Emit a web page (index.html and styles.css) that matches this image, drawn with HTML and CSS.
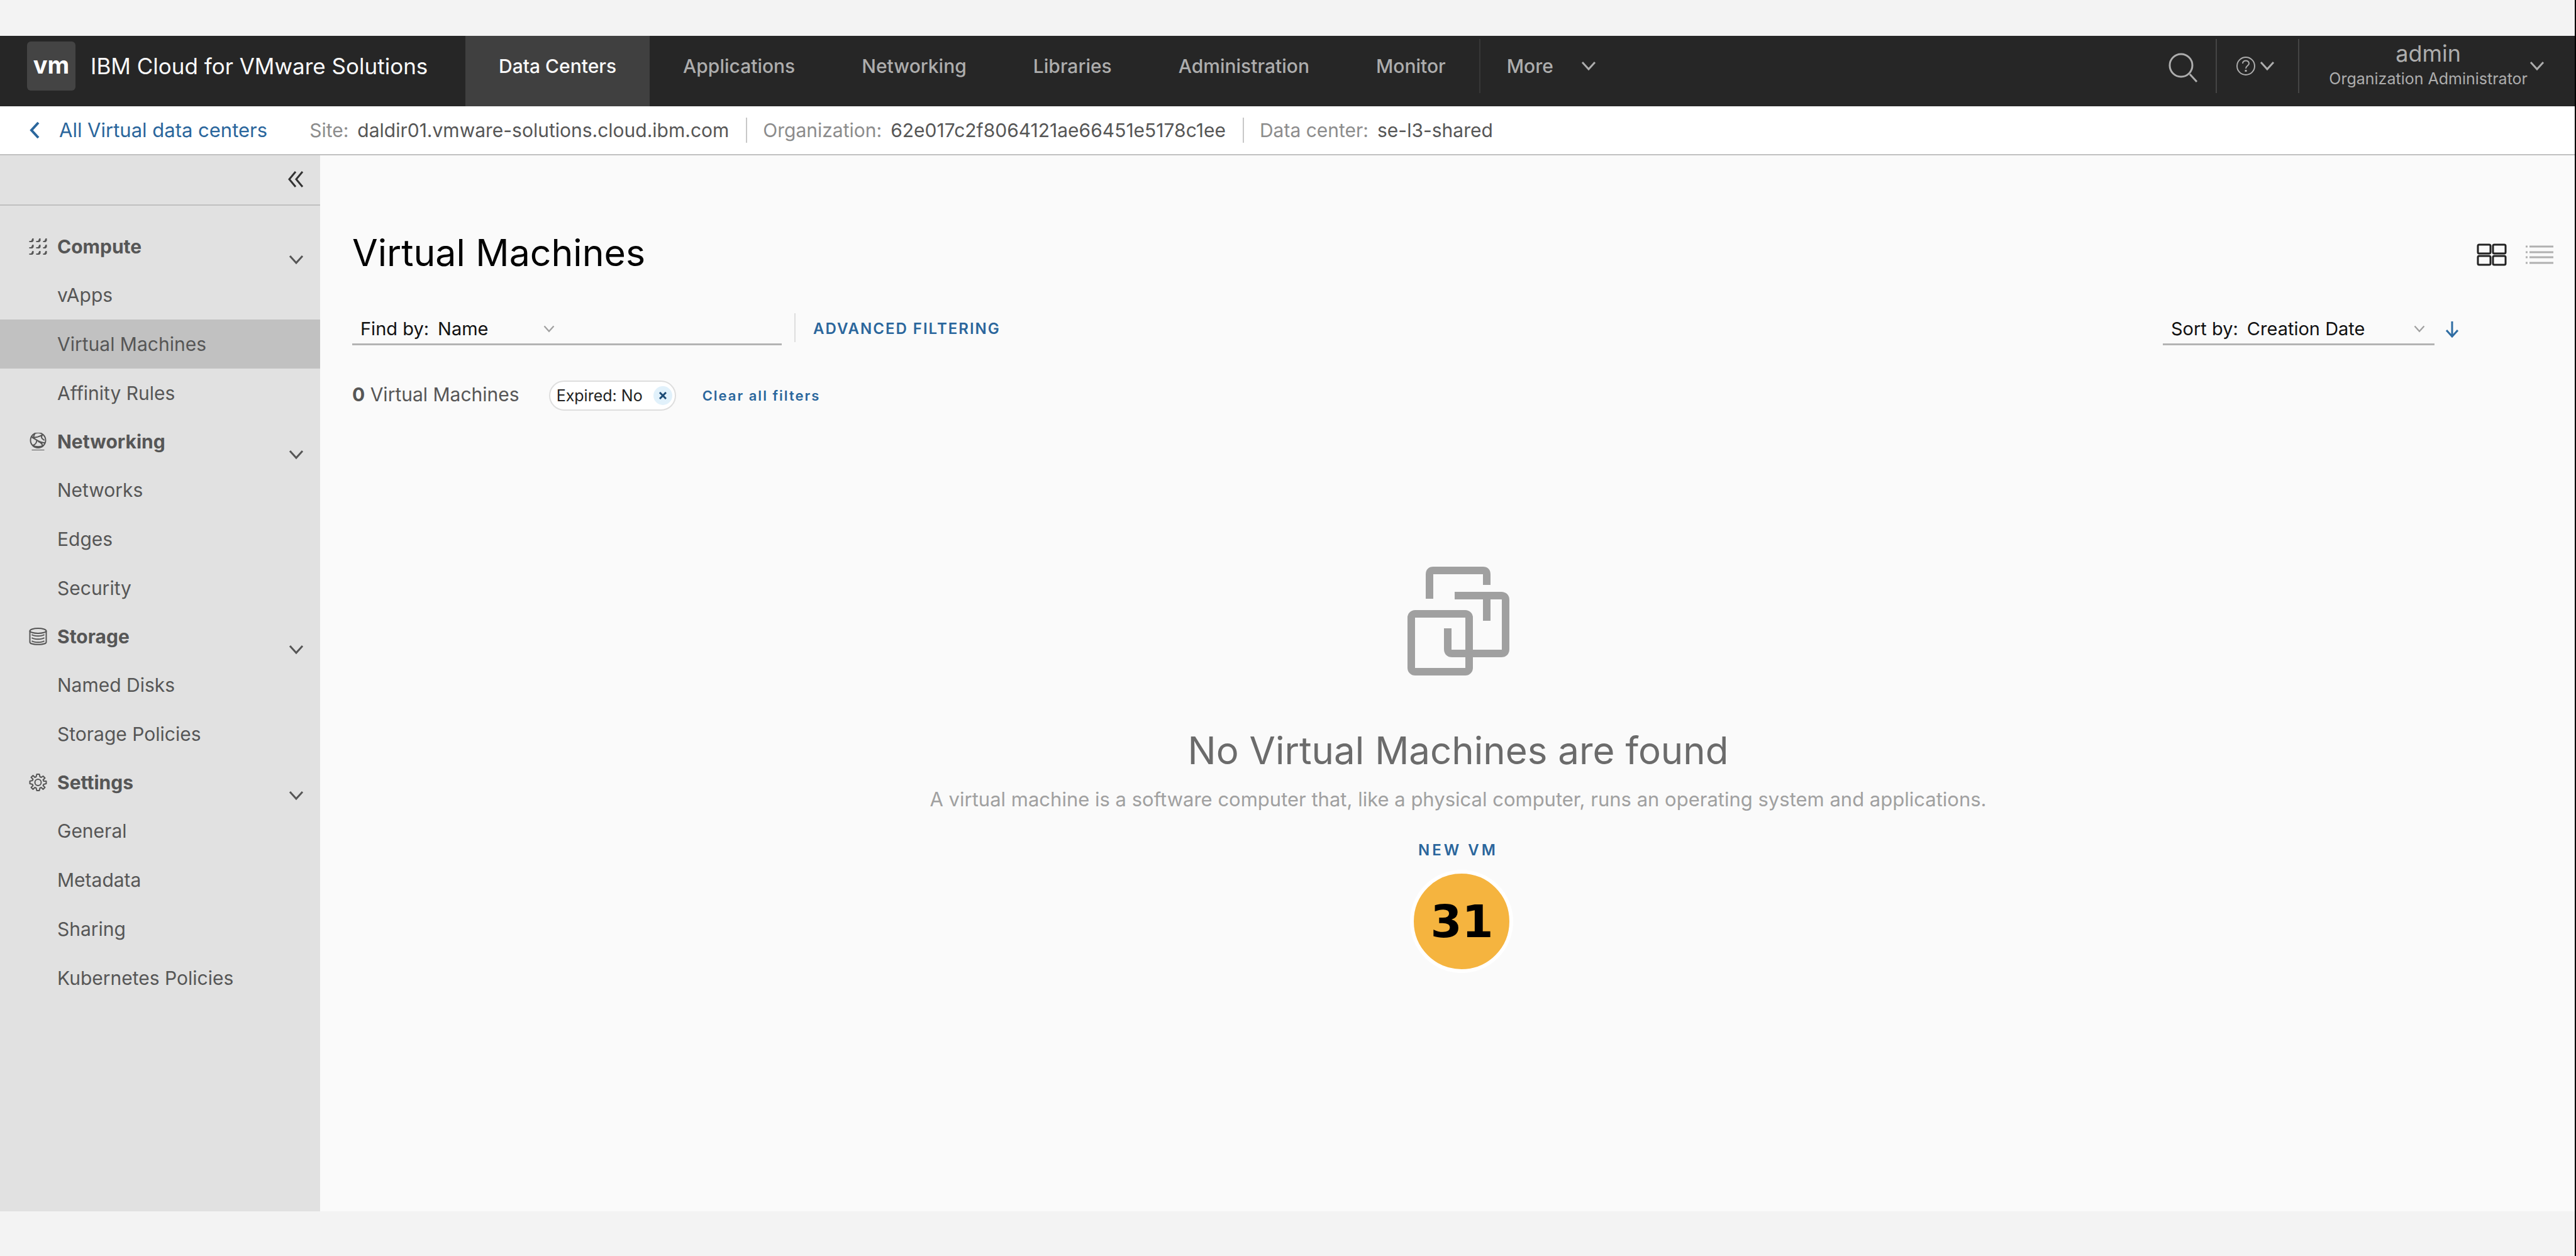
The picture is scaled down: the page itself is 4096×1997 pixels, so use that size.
FILE: index.html
```html
<!DOCTYPE html>
<html lang="en">
<head>
<meta charset="utf-8">
<title>Virtual Machines</title>
<link rel="stylesheet" href="styles.css">
</head>
<body>
<svg class="sprite" aria-hidden="true">
  <symbol id="chevron" viewBox="0 0 24 16"><path d="M2 2 L12 13 L22 2" fill="none" stroke="currentColor" stroke-width="3"/></symbol>
</svg>
<div class="page">
  <header class="topbar">
    <a class="brand" href="#"><span class="logo">vm</span><span class="product">IBM Cloud for VMware Solutions</span></a>
    <nav class="tabs" aria-label="Main">
      <a class="tab active" href="#">Data Centers</a>
      <a class="tab" href="#">Applications</a>
      <a class="tab" href="#">Networking</a>
      <a class="tab" href="#">Libraries</a>
      <a class="tab" href="#">Administration</a>
      <a class="tab" href="#">Monitor</a>
    </nav>
    <button class="more" type="button">More <svg class="chev"><use href="#chevron"/></svg></button>
    <div class="tools">
      <button class="search" type="button" aria-label="Search"><svg width="48" height="48" viewBox="0 0 48 48" fill="none" stroke="currentColor" stroke-width="3"><circle cx="21" cy="20" r="18"/><path d="M35 34 L46 46"/></svg></button>
      <button class="help" type="button" aria-label="Help"><svg width="32" height="32" viewBox="0 0 32 32" fill="none" stroke="currentColor" stroke-width="2"><circle cx="16" cy="16" r="14"/><path d="M11 12 C11 6 21 6 21 12 C21 16 16 15 16 20"/><path d="M16 22 V25" stroke-width="3"/></svg><svg class="chev"><use href="#chevron"/></svg></button>
      <button class="user" type="button"><span class="who"><span class="name">admin</span><span class="role">Organization Administrator</span></span><svg class="chev"><use href="#chevron"/></svg></button>
    </div>
  </header>
  <div class="context">
    <a class="back" href="#"><svg width="16" height="28" viewBox="0 0 16 28" fill="none" stroke="currentColor" stroke-width="4"><path d="M14 2 L3 14 L14 26"/></svg>All Virtual data centers</a>
    <dl class="facts">
      <div class="fact"><dt>Site:</dt><dd>daldir01.vmware-solutions.cloud.ibm.com</dd></div>
      <div class="fact"><dt>Organization:</dt><dd>62e017c2f8064121ae66451e5178c1ee</dd></div>
      <div class="fact"><dt>Data center:</dt><dd>se-l3-shared</dd></div>
    </dl>
  </div>
  <div class="body">
    <aside class="sidebar">
      <div class="collapse"><button type="button" aria-label="Collapse"><svg width="26" height="26" viewBox="0 0 26 26" fill="none" stroke="currentColor" stroke-width="3"><path d="M13 1 L3 13 L13 25 M24 1 L14 13 L24 25"/></svg></button></div>
      <nav class="menu" aria-label="Data center">
        <button class="group" type="button"><svg class="icon" viewBox="0 0 28 28" fill="currentColor"><path d="M0 5h3l2-4h2v4l-2 2H0zM11 5h3l2-4h2v4l-2 2h-5zM22 5h2l2-4h2v4l-2 2h-4zM0 15h3l2-4h2v4l-2 2H0zM11 15h3l2-4h2v4l-2 2h-5zM22 15h2l2-4h2v4l-2 2h-4zM0 25h3l2-4h2v4l-2 2H0zM11 25h3l2-4h2v4l-2 2h-5zM22 25h2l2-4h2v4l-2 2h-4z"/></svg>Compute<svg class="chev"><use href="#chevron"/></svg></button>
        <a href="#">vApps</a>
        <a class="current" href="#">Virtual Machines</a>
        <a href="#">Affinity Rules</a>
        <button class="group" type="button"><svg class="icon" viewBox="0 0 28 28" fill="none" stroke="currentColor" stroke-width="2"><circle cx="14" cy="12" r="12"/><path d="M4 28 H24 M5 20 C10 23 18 23 23 20 M4 7 C10 10 17 17 25 16 M4 7 C9 8 17 7 21 3 M9 2 C7 4 6 7 9 9 M12 12 C12 16 9 19 6 20 M21 3 C18 8 20 9 24 12 M14 14 C18 15 20 17 21 20"/></svg>Networking<svg class="chev"><use href="#chevron"/></svg></button>
        <a href="#">Networks</a>
        <a href="#">Edges</a>
        <a href="#">Security</a>
        <button class="group" type="button"><svg class="icon" viewBox="0 0 28 28" fill="none" stroke="currentColor" stroke-width="2"><path d="M1 5 V23 C1 28 27 28 27 23 V5"/><ellipse cx="14" cy="5" rx="13" ry="4"/><path d="M4 11 C8 14 20 14 24 11 M4 16 C8 19 20 19 24 16 M4 21 C8 24 20 24 24 21"/></svg>Storage<svg class="chev"><use href="#chevron"/></svg></button>
        <a href="#">Named Disks</a>
        <a href="#">Storage Policies</a>
        <button class="group" type="button"><svg class="icon" viewBox="0 0 28 28" fill="none" stroke="currentColor" stroke-width="2"><circle cx="14" cy="14" r="5"/><path d="M11 5 L12 1 H16 L17 5 L19 6 L22 4 L25 7 L22 10 L23 12 L27 12 V16 L23 17 L22 19 L25 22 L22 25 L19 22 L17 23 L16 27 H12 L11 23 L9 22 L6 25 L3 22 L6 19 L5 17 L1 16 V12 L5 11 L6 9 L3 6 L6 3 L9 6 Z" stroke-linejoin="round"/></svg>Settings<svg class="chev"><use href="#chevron"/></svg></button>
        <a href="#">General</a>
        <a href="#">Metadata</a>
        <a href="#">Sharing</a>
        <a href="#">Kubernetes Policies</a>
      </nav>
    </aside>
    <main class="main">
      <div class="heading">
        <h1>Virtual Machines</h1>
        <div class="views">
          <button class="cards" type="button" aria-label="Card view"><svg width="48" height="36" viewBox="0 0 48 36" fill="none" stroke="currentColor" stroke-width="3"><rect x="2" y="2" width="20" height="14" rx="2"/><rect x="26" y="2" width="20" height="14" rx="2"/><rect x="2" y="20" width="20" height="14" rx="2"/><rect x="26" y="20" width="20" height="14" rx="2"/></svg></button>
          <button class="rows" type="button" aria-label="List view"><svg width="44" height="32" viewBox="0 0 44 32" stroke="currentColor" stroke-width="3"><path d="M0 3 H3 M6 3 H44 M0 12 H3 M6 12 H44 M0 20 H3 M6 20 H44 M0 29 H3 M6 29 H44"/></svg></button>
        </div>
      </div>
      <div class="filters">
        <div class="field find">
          <label for="find">Find by:</label>
          <span class="pick"><select id="find"><option>Name</option></select><svg class="chev"><use href="#chevron"/></svg></span>
          <input type="text" aria-label="Filter value">
        </div>
        <button class="action advanced" type="button">ADVANCED FILTERING</button>
        <div class="field sort">
          <label for="sort">Sort by:</label>
          <span class="pick"><select id="sort"><option>Creation Date</option></select><svg class="chev"><use href="#chevron"/></svg></span>
        </div>
        <button class="direction" type="button" aria-label="Descending"><svg width="20" height="26" viewBox="0 0 20 26" fill="none" stroke="currentColor" stroke-width="3"><path d="M10 0 V24 M1 14 L10 24 L19 14"/></svg></button>
      </div>
      <div class="summary">
        <p class="count"><b>0</b> Virtual Machines</p>
        <span class="chip">Expired: No <button type="button" aria-label="Remove filter"><svg width="12" height="12" viewBox="0 0 12 12" stroke="currentColor" stroke-width="3"><path d="M1 1 L11 11 M11 1 L1 11"/></svg></button></span>
        <button class="action clear" type="button">Clear all filters</button>
      </div>
      <section class="empty">
        <svg width="162" height="173" viewBox="0 0 162 173" fill="none" stroke="currentColor" stroke-width="12"><path d="M35 51 V12 Q35 6 41 6 H120 Q126 6 126 12 V29 M126 46 V86 M75 46 H149 Q156 46 156 53 V131 Q156 138 149 138 H71 Q64 138 64 131 V98"/><rect x="6" y="75" width="92" height="92" rx="6"/></svg>
        <h2>No Virtual Machines are found</h2>
        <p>A virtual machine is a software computer that, like a physical computer, runs an operating system and applications.</p>
        <div class="create"><button class="action" type="button">NEW VM</button><span class="step">31</span></div>
      </section>
    </main>
  </div>
</div>
</body>
</html>
```
FILE: styles.css
```css
* { box-sizing: border-box; }
html { background: #f3f3f3; }
body { margin: 0; font-family: Inter, "Liberation Sans", sans-serif; font-size: 30px; line-height: 40px; color: #565656; }
.sprite { display: none; }
button, select, input { font: inherit; color: inherit; background: none; border: 0; padding: 0; margin: 0; appearance: none; outline: 0; }
a { color: inherit; text-decoration: none; }
h1, h2, p, dl, dd { margin: 0; font-weight: 400; }
svg { display: block; flex: none; }
.chev { width: 24px; height: 16px; }

.page { min-height: 100vh; display: flex; flex-direction: column; padding: 57px 0 71px; border-right: 2px solid #000; }

.topbar { display: flex; height: 112px; background: #262626; color: #adadad; font-weight: 500; }
.brand { width: 740px; padding: 0 0 16px 43px; display: flex; align-items: center; gap: 24px; color: #fafafa; font-weight: 400; font-size: 35px; white-space: nowrap; }
.logo { width: 77px; height: 78px; border-radius: 6px; background: #444; color: #fff; font-weight: 700; font-size: 38px; line-height: 74px; text-align: center; }
.tabs { display: flex; }
.tab { display: flex; align-items: center; padding: 0 53px 16px; white-space: nowrap; }
.tab.active { background: #404040; color: #fafafa; }
.more, .search, .help, .user { display: flex; align-items: center; height: 86px; margin-top: 5px; }
.more { border-left: 2px solid #363636; padding-left: 42px; gap: 44px; }
.tools { display: flex; margin-left: auto; }
.search { padding: 5px 28px 0 0; }
.help { width: 131px; border-left: 2px solid #444; padding-left: 30px; gap: 6px; }
.user { border-left: 2px solid #444; padding: 0 48px 0 47px; gap: 3px; }
.who { display: flex; flex-direction: column; align-items: center; font-weight: 400; }
.name { font-size: 36px; line-height: 40px; }
.role { font-size: 25px; line-height: 40px; }

.context { display: flex; align-items: center; height: 78px; background: #fff; border-bottom: 2px solid #c0c0c0; padding-left: 47px; }
.back { display: flex; align-items: center; gap: 31px; color: #2a669c; margin-right: 67px; font-size: 31px; }
.facts { display: flex; }
.fact { display: flex; gap: 14px; padding-right: 27px; margin-right: 25px; border-right: 2px solid #c8c8c8; }
.fact:last-child { border: 0; }
.fact dt { color: #8c8c8c; }

.body { flex: 1; display: flex; }
.sidebar { width: 509px; background: #e1e1e1; }
.collapse { height: 80px; display: flex; align-items: center; justify-content: flex-end; padding: 0 26px 3px 0; border-bottom: 2px solid #c0c0c0; color: #333; }
.menu { padding-top: 27px; }
.menu a { display: block; padding-left: 91px; line-height: 78px; }
.menu .current { background: #c1c1c1; }
.group { width: 100%; height: 76px; padding: 0 26px 0 46px; display: flex; align-items: center; gap: 16px; font-weight: 700; }
.group .icon { width: 29px; height: 28px; }
.group .chev { margin: 42px 0 0 auto; }

.main { flex: 1; background: #fafafa; padding: 115px 17px 0 51px; }
.heading { display: flex; align-items: center; justify-content: space-between; height: 80px; padding-right: 17px; }
h1 { font-size: 59px; line-height: 80px; color: #000; }
.views { display: flex; align-items: center; gap: 30px; padding-top: 6px; }
.cards { color: #222; }
.rows { color: #b0b0b0; }
.filters { display: flex; align-items: center; margin-top: 51px; padding-right: 168px; }
.field { display: flex; align-items: center; height: 56px; padding: 6px 15px 0 13px; border-bottom: 3px solid #b3b3b3; color: #111; font-size: 29px; }
.find { width: 683px; gap: 14px; }
.find input { flex: 1; min-width: 0; }
.find .pick { width: 186px; }
.pick { display: flex; align-items: center; }
.pick select { flex: 1; }
.pick .chev { width: 18px; height: 12px; color: #a0a0a0; }
.action { color: #2a669c; font-weight: 600; font-size: 24px; letter-spacing: 2px; }
.advanced { margin-left: 20px; padding: 4px 0 0 28px; height: 46px; border-left: 2px solid #dedede; }
.sort { width: 432px; margin-left: auto; gap: 14px; }
.sort .pick { flex: 1; }
.direction { margin-left: 18px; padding-top: 5px; color: #2f6da3; }
.summary { display: flex; align-items: center; height: 48px; margin-top: 56px; }
.count { padding-bottom: 4px; }
.chip { display: flex; align-items: center; justify-content: space-between; width: 202px; height: 48px; margin: 0 42px 0 47px; padding: 0 4px 0 10px; background: #fff; border: 2px solid #dedede; border-radius: 24px; font-size: 25px; color: #222; }
.chip button { display: grid; place-items: center; width: 30px; height: 30px; border-radius: 15px; background: #e1f1fb; color: #1b4a75; }
.clear { font-size: 22px; }
.empty { display: flex; flex-direction: column; align-items: center; margin-top: 248px; color: #a0a0a0; }
h2 { margin-top: 79px; font-size: 60px; line-height: 80px; color: #6b6b6b; }
.empty p { margin-top: 18px; font-size: 31px; }
.create { position: relative; margin-top: 38px; }
.create .action { letter-spacing: 4px; }
.step { position: absolute; left: 50%; top: 54px; width: 164px; height: 164px; margin-left: -76px; border: 6px solid #fff; border-radius: 50%; background: #f5b43f; color: #000; font: 700 72px/152px "DejaVu Sans", sans-serif; text-align: center; }
```
